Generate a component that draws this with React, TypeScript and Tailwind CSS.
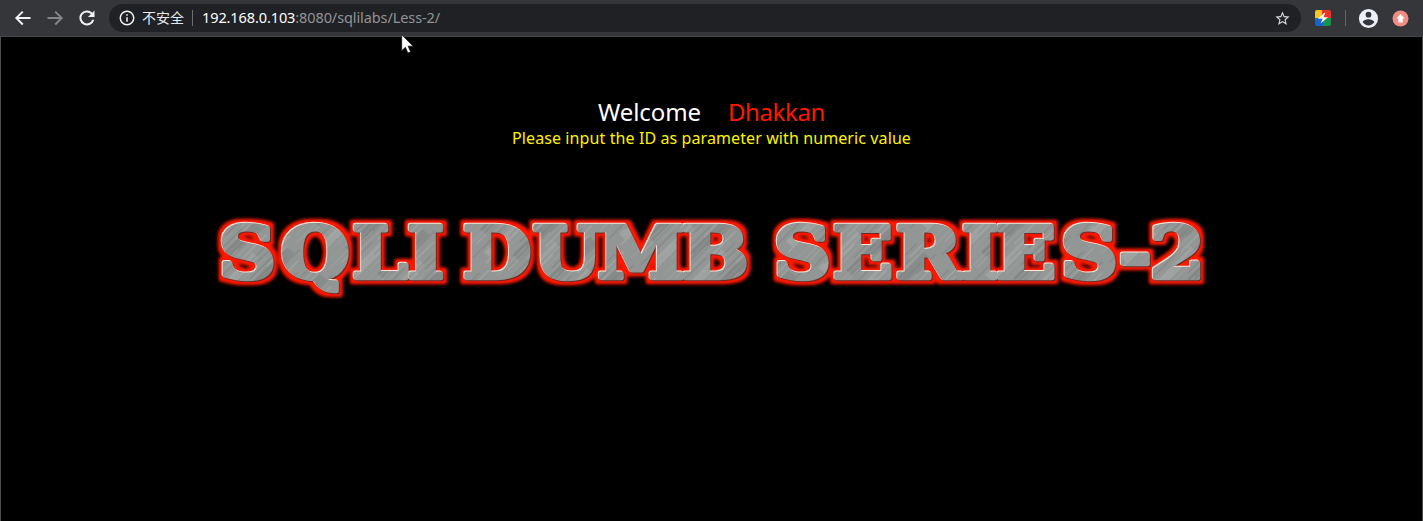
import React from "react";

const strokes = [
  [0, 0.8, "#b3b7b6"], [1.9, 0.5, "#606564"], [3.3, 1.1, "#979b9a"], [5.2, 0.5, "#bfc2c0"],
  [6.9, 0.8, "#747978"], [9.1, 0.5, "#b0b4b2"], [11.2, 1.1, "#7b807f"], [13.4, 0.5, "#babdbb"],
  [15.6, 0.5, "#5f6463"], [17.3, 1.2, "#9da1a0"], [20.2, 0.6, "#6b706f"], [22.1, 0.9, "#b0b4b2"],
  [24.8, 0.5, "#686d6c"], [27.1, 1, "#a4a8a6"], [29.6, 0.6, "#6f7473"], [32.3, 0.9, "#b1b5b3"],
  [34.9, 0.5, "#646968"], [36.8, 0.8, "#a2a6a4"],
] as const;

const stretch = 1.11;

const words = [
  { text: "SQLI", at: [219, 281, 352.5, 407.5] },
  { text: "DUMB", at: [463, 533, 598, 682] },
  { text: "SERIES-2", at: [774, 833, 896, 962, 996, 1061, 1119, 1150] },
];

function Banner() {
  return (
    <svg className="block h-[110px] w-[1023px]" viewBox="200 200 1023 110" role="img" aria-label="SQLI DUMB SERIES-2">
      <defs>
        <pattern id="steel" width="39" height="95" patternUnits="userSpaceOnUse" patternTransform="rotate(42)">
          <rect width="39" height="95" fill="#929695" />
          <rect x="6" y="10" width="9" height="60" fill="#7b807f" opacity="0.5" />
          <rect x="24" y="35" width="8" height="50" fill="#a9adab" opacity="0.5" />
          {strokes.map(([x, w, c], i) => (
            <rect key={x} x={x} y={(i * 23) % 60} width={w} height={22 + ((i * 11) % 28)} fill={c} opacity="0.7" />
          ))}
        </pattern>
        <filter id="glow" x="200" y="200" width="1023" height="110" filterUnits="userSpaceOnUse" colorInterpolationFilters="sRGB">
          <feMorphology in="SourceAlpha" operator="dilate" radius="4" result="wide" />
          <feGaussianBlur in="wide" stdDeviation="1.8" result="soft" />
          <feFlood floodColor="#ff1800" />
          <feComposite in2="soft" operator="in" result="red" />
          <feOffset in="SourceAlpha" dx="-0.6" dy="-0.6" result="up" />
          <feFlood floodColor="#ffe9df" />
          <feComposite in2="up" operator="in" result="light" />
          <feOffset in="SourceAlpha" dx="0.5" dy="0.5" result="down" />
          <feFlood floodColor="#6e2b24" />
          <feComposite in2="down" operator="in" result="dark" />
          <feMerge>
            <feMergeNode in="red" />
            <feMergeNode in="dark" />
            <feMergeNode in="light" />
            <feMergeNode in="SourceGraphic" />
          </feMerge>
        </filter>
      </defs>
      <g filter="url(#glow)">
        <g
          transform={`scale(${stretch} 1)`}
          fill="url(#steel)"
          stroke="url(#steel)"
          strokeWidth="4.4"
          strokeLinejoin="round"
          fontFamily="'DejaVu Serif', serif"
          fontWeight="700"
          fontSize="71"
        >
          {words.map((word) => (
            <text key={word.text} y="277.500" x={word.at.map((x) => (x / stretch).toFixed(2)).join(" ")}>
              {word.text}
            </text>
          ))}
        </g>
      </g>
    </svg>
  );
}

const icon = "block shrink-0";

function Toolbar() {
  return (
    <header className="flex h-[37px] items-center border-b border-[#45464a] bg-[#35363a] pl-[14px] pr-[14px]">
      <svg className={icon} width="18" height="18" viewBox="0 0 24 24" fill="#f1f3f4">
        <path d="M22 10.7H6.2l6.4-6.4L10.8 2.500 1.300 12l9.500 9.500 1.800-1.800-6.400-6.400H22z" />
      </svg>
      <svg className="ml-[14px] block shrink-0" width="18" height="18" viewBox="0 0 24 24" fill="#85878a">
        <path d="M2 10.700h15.800l-6.400-6.400 1.800-1.800L22.700 12l-9.500 9.500-1.800-1.800 6.400-6.400H2z" />
      </svg>
      <svg className="ml-[13px] block shrink-0" width="20" height="20" viewBox="0 0 24 24" fill="#f1f3f4">
        <path d="M18.4 5.600A9 9 0 1 0 20.700 14h-2.500a6.600 6.600 0 1 1-1.500-6.700L13.200 10.900H21V3z" />
      </svg>
      <div className="ml-[12px] flex h-[28px] w-[1192px] items-center rounded-full bg-[#202124] pl-[9px] pr-[10px] font-['Noto_Sans','Noto_Sans_CJK_SC',sans-serif] text-[14px] leading-[28px]">
        <svg className={icon} width="18" height="18" viewBox="0 0 24 24" fill="#f1f3f4">
          <path d="M11 7h2v2h-2zm0 4h2v6h-2zm1-9a10 10 0 1 0 0 20 10 10 0 0 0 0-20zm0 18a8 8 0 1 1 0-16 8 8 0 0 1 0 16z" />
        </svg>
        <span className="ml-[6px] w-[50px] whitespace-nowrap text-[14px] text-[#e8eaed]">不安全</span>
        <span className="h-4 w-px bg-[#6b6d70]" />
        <span className="relative -top-px ml-[9px] whitespace-nowrap text-[14.500px] tracking-[-0.100px] text-[#929497]">
          <span className="text-white">192.168.0.103</span>:8080/sqlilabs/Less-2/
        </span>
        <svg className="ml-auto block shrink-0" width="17" height="17" viewBox="0 0 24 24" fill="#d5d7da">
          <path d="m22 9.240-7.190-.62L12 2 9.190 8.630 2 9.240l5.460 4.730L5.820 21 12 17.270 18.180 21l-1.630-7.030L22 9.240zM12 15.400l-3.760 2.270 1-4.280-3.320-2.880 4.380-.38L12 6.100l1.710 4.040 4.380.38-3.320 2.880 1 4.280L12 15.400z" />
        </svg>
      </div>
      <svg className="ml-[14px] block shrink-0" width="16" height="16" viewBox="0 0 16 16">
        <defs><clipPath id="tile"><rect width="16" height="16" rx="2" /></clipPath></defs>
        <g clipPath="url(#tile)">
          <path d="M0 0h8L6 10H0z" fill="#fbc51c" />
          <path d="M7 0h9v8H7z" fill="#e8352e" />
          <path d="M8 8h8v8H8z" fill="#16944a" />
          <path d="M0 8h8v8H0z" fill="#1764cf" />
          <path d="M9 3 3 8.700h4.700L5.500 13.500 13 7.200H8.500L10.200 3z" fill="#fff" />
        </g>
      </svg>
      <span className="ml-[14px] h-4 w-px bg-[#63656a]" />
      <svg className="ml-[11px] block shrink-0" width="23" height="23" viewBox="0 0 24 24" fill="#eef0f8">
        <path d="M12 2a10 10 0 1 0 0 20 10 10 0 0 0 0-20zm0 3a3 3 0 1 1 0 6 3 3 0 0 1 0-6zm0 14.200a7.200 7.200 0 0 1-6-3.220c.03-1.990 4-3.080 6-3.080s5.970 1.090 6 3.080a7.200 7.200 0 0 1-6 3.220z" />
      </svg>
      <svg className="ml-[12px] block shrink-0" width="17" height="17" viewBox="0 0 17 17">
        <circle cx="8.500" cy="8.500" r="8" fill="#f28b82" />
        <path d="M8.500 4 4.300 8.400h2V12.500h4.400V8.400h2z" fill="#fff" />
      </svg>
    </header>
  );
}

export default function App() {
  return (
    <div className="relative h-[521px] w-[1423px] overflow-hidden bg-black font-['Noto_Sans',sans-serif]">
      <Toolbar />
      <main className="flex h-[484px] flex-col items-center border-x border-[#4a4b4e] pt-[57px]">
        <h1 className="flex h-[35px] items-center text-[24px] leading-[35px] text-white">
          <span className="tracking-[-0.100px]">Welcome</span>
          <span className="ml-[27px] tracking-[-0.400px] text-[#ff1800]">Dhakkan</span>
        </h1>
        <p className="mt-px h-[16px] whitespace-nowrap text-[16px] leading-[16px] tracking-[0.100px] text-[#fff200]">
          Please input the ID as parameter with numeric value
        </p>
        <div className="mt-[55px]"><Banner /></div>
      </main>
      <svg className="absolute left-[401px] top-[34px]" width="13" height="20" viewBox="0 0 13 20">
        <path d="M.7.800v16l3.700-3.500 2.500 5.700 2.700-1.200-2.500-5.600h5z" fill="#fff" stroke="#111" strokeWidth=".7" />
      </svg>
    </div>
  );
}
